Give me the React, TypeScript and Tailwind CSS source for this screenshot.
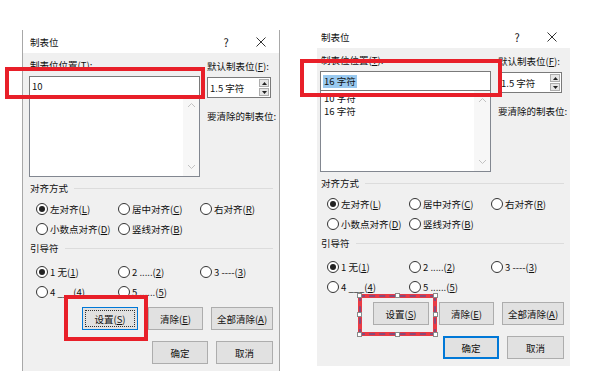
import React from 'react'
import clsx from 'clsx'

const FONT = "[font-family:'Noto_Sans_CJK_SC','Noto_Sans',sans-serif]"

type Props = { children?: React.ReactNode; checked?: boolean }

const Radio = ({ checked, children }: Props) => (
  <div className="flex w-[82px] shrink-0 items-center">
    <span className="flex h-[12px] w-[12px] shrink-0 items-center justify-center rounded-full border border-[#333] bg-white">
      {checked && <span className="h-[6px] w-[6px] rounded-full bg-[#222]" />}
    </span>
    <span className="ml-[2px] whitespace-nowrap">{children}</span>
  </div>
)

const Section = ({ title, gap }: { title: string; gap: string }) => (
  <div className="flex h-[16px] items-center">
    <span className="ml-[1px] whitespace-nowrap">{title}</span>
    <span className={clsx('h-px flex-1 bg-[#dcdcdc]', gap)} />
  </div>
)

const Btn = ({
  w,
  children,
  def,
  focus
}: {
  w: string
  children: React.ReactNode
  def?: 'thin' | 'thick'
  focus?: boolean
}) => (
  <div
    className={clsx(
      'relative flex h-[23px] shrink-0 items-center justify-center bg-[#e1e1e1] whitespace-nowrap',
      w,
      def === 'thick'
        ? 'border-2 border-[#0078d7]'
        : def === 'thin'
          ? 'border border-[#0078d7]'
          : 'border border-[#adadad]'
    )}
  >
    {focus && (
      <span className="absolute inset-[2px] border border-dotted border-[#333]" />
    )}
    {children}
  </div>
)

const Chevron = ({ up }: { up?: boolean }) => (
  <svg width="9" height="6" viewBox="0 0 9 6">
    <path
      d={up ? 'M1 5 L4.5 1.5 L8 5' : 'M1 1 L4.5 4.5 L8 1'}
      fill="none"
      stroke="#c2c2c2"
      strokeWidth="1"
    />
  </svg>
)

const Tri = ({ up }: { up?: boolean }) => (
  <svg width="5" height="3" viewBox="0 0 5 3">
    <path d={up ? 'M0 3 L2.5 0 L5 3Z' : 'M0 0 L2.5 3 L5 0Z'} fill="#222" />
  </svg>
)

const Dialog = ({ second }: { second?: boolean }) => (
  <div className="flex h-[341px] w-[258px] shrink-0 flex-col border-x border-[#a8a8a8]">
    {/* title bar */}
    <div className="flex h-[23px] items-center bg-white pl-[7px] pr-[12px]">
      <span className="flex-1">制表位</span>
      <span className="w-[12px] text-center text-[11px]">?</span>
      <span className="ml-[23px] flex w-[12px] justify-center">
        <svg width="10" height="10" viewBox="0 0 10 10">
          <path d="M0.5 0.5 L9.5 9.5 M9.5 0.5 L0.5 9.5" stroke="#333" strokeWidth="1" />
        </svg>
      </span>
    </div>

    <div className="flex flex-1 flex-col bg-[#f0f0f0] px-[6px]">
      <div className="flex">
        <div className="flex w-[171px] shrink-0 flex-col">
          <div className="ml-[1px] mt-[4px] h-[16px]">
            制表位位置(<u>T</u>):
          </div>
          <div className="mt-[3px] flex h-[20px] items-center border border-[#7a7a7a] bg-white pl-[2px]">
            {second ? (
              <span className="bg-[#99c9ef] px-[1px] leading-[13px]">16 字符</span>
            ) : (
              <span>10</span>
            )}
          </div>
          <div className="flex h-[81px] border border-t-0 border-[#828790] bg-white">
            <div className="flex flex-1 flex-col pl-[3px] pt-[1px] leading-[13px]">
              {second && (
                <>
                  <span>10 字符</span>
                  <span>16 字符</span>
                </>
              )}
            </div>
            <div className="flex w-[16px] flex-col items-center justify-between bg-[#f7f7f7] py-[6px]">
              <Chevron up />
              <Chevron />
            </div>
          </div>
        </div>

        <div className="ml-[7px] flex flex-col">
          <div className="mt-[5px] h-[16px] whitespace-nowrap">
            默认制表位(<u>F</u>):
          </div>
          <div className="mt-[3px] flex h-[21px] w-[64px] items-center border border-[#7a7a7a] bg-white">
            <span className="flex-1 pl-[2px] whitespace-nowrap">1.5 字符</span>
            <div className="mr-[1px] flex h-[17px] w-[10px] flex-col gap-px">
              <span className="flex flex-1 items-center justify-center border border-[#adadad] bg-[#e6e6e6]">
                <Tri up />
              </span>
              <span className="flex flex-1 items-center justify-center border border-[#adadad] bg-[#e6e6e6]">
                <Tri />
              </span>
            </div>
          </div>
          <div className="mt-[10px] whitespace-nowrap">要清除的制表位:</div>
        </div>
      </div>

      <div className="mt-[3px]">
        <Section title="对齐方式" gap="ml-[6px]" />
      </div>
      <div className="mt-[3px] flex h-[20px] items-center pl-[7px]">
        <Radio checked>
          左对齐(<u>L</u>)
        </Radio>
        <Radio>
          居中对齐(<u>C</u>)
        </Radio>
        <Radio>
          右对齐(<u>R</u>)
        </Radio>
      </div>
      <div className="flex h-[20px] items-center pl-[7px]">
        <Radio>
          小数点对齐(<u>D</u>)
        </Radio>
        <Radio>
          竖线对齐(<u>B</u>)
        </Radio>
      </div>

      <div className="mt-[1px]">
        <Section title="引导符" gap="ml-[6px]" />
      </div>
      <div className="mt-[6px] flex h-[20px] items-center pl-[7px]">
        <Radio checked>
          1 无(<u>1</u>)
        </Radio>
        <Radio>
          2 .....(<u>2</u>)
        </Radio>
        <Radio>
          3 ----(<u>3</u>)
        </Radio>
      </div>
      <div className="flex h-[20px] items-center pl-[7px]">
        <Radio>
          4 ___(<u>4</u>)
        </Radio>
        <Radio>
          5 ......(<u>5</u>)
        </Radio>
      </div>

      <div className="mt-[5px] flex pl-[53px]">
        <Btn w="w-[56px]" def={second ? undefined : 'thin'} focus={!second}>
          设置(<u>S</u>)
        </Btn>
        <div className="ml-[10px]">
          <Btn w="w-[55px]">
            清除(<u>E</u>)
          </Btn>
        </div>
        <div className="ml-[8px]">
          <Btn w="w-[62px]">
            全部清除(<u>A</u>)
          </Btn>
        </div>
      </div>
      <div className="mt-[11px] flex pl-[123px]">
        <Btn w="w-[56px]" def={second ? 'thick' : undefined}>
          确定
        </Btn>
        <div className="ml-[8px]">
          <Btn w="w-[57px]">取消</Btn>
        </div>
      </div>
    </div>
  </div>
)

const Handle = ({ className }: { className: string }) => (
  <span
    className={clsx(
      'absolute h-[5px] w-[5px] border border-[#8a8a8a] bg-white',
      className
    )}
  />
)

export default function App() {
  return (
    <div
      className={clsx(
        'relative flex h-[387px] w-[600px] items-start overflow-hidden bg-white text-[9.5px] leading-[16px] text-[#111]',
        FONT
      )}
    >
      <div className="ml-[22px] mt-[30px]">
        <Dialog />
      </div>
      <div className="ml-[37px] mt-[25px] w-[253px] overflow-hidden">
        <div className="ml-[-4px]">
          <Dialog second />
        </div>
      </div>

      {/* annotations */}
      <div className="absolute left-[5px] top-[67px] h-[32px] w-[200px] border-4 border-[#e81f29]" />
      <div className="absolute left-[64px] top-[295px] h-[46px] w-[84px] border-4 border-[#e81f29]" />
      <div className="absolute left-[300px] top-[59px] h-[38px] w-[202px] border-4 border-[#e81f29]" />
      <div className="absolute left-[358px] top-[294px] h-[42px] w-[79px] border-4 border-[#ea3a44]">
        <span className="absolute inset-[-3px] border-2 border-dashed border-[#8a4a7a]" />
        <Handle className="left-[-5px] top-[-5px]" />
        <Handle className="left-[33px] top-[-5px]" />
        <Handle className="right-[-5px] top-[-5px]" />
        <Handle className="left-[-5px] top-[14px]" />
        <Handle className="right-[-5px] top-[14px]" />
        <Handle className="bottom-[-5px] left-[-5px]" />
        <Handle className="bottom-[-5px] left-[33px]" />
        <Handle className="bottom-[-5px] right-[-5px]" />
      </div>
    </div>
  )
}
